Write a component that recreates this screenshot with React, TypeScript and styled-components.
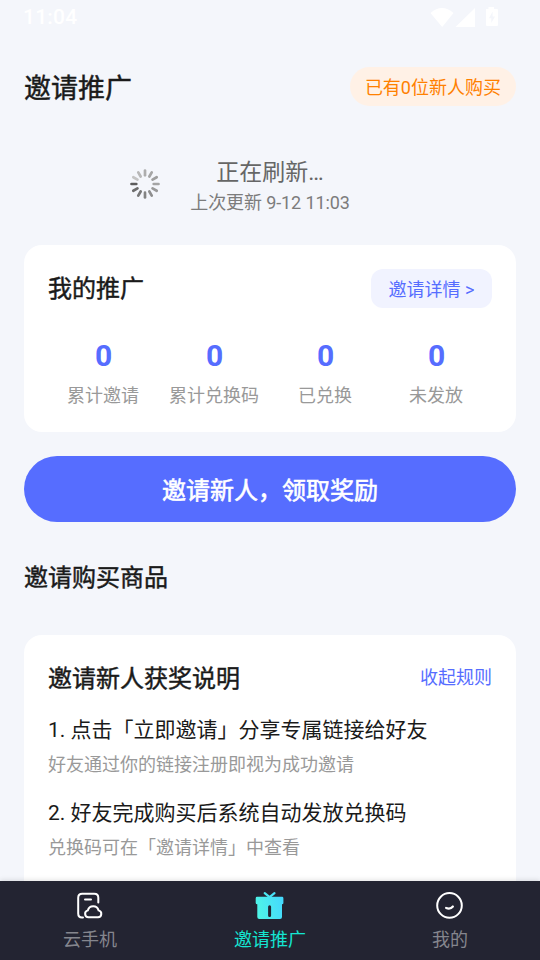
import React from "react";
import styled, { createGlobalStyle } from "styled-components";

const GlobalStyle = createGlobalStyle`
  * { box-sizing: border-box; }
  body {
    margin: 0;
    background: #f4f6fb;
    font-family: Roboto, "Noto Sans CJK SC", sans-serif;
    font-weight: 400;
  }
`;

const Screen = styled.div`
  width: 540px;
  height: 960px;
  display: flex;
  flex-direction: column;
  overflow: hidden;
  background: #f4f6fb;
`;

const StatusBar = styled.header`
  flex: none;
  height: 36px;
  padding: 0 42px 0 23px;
  display: flex;
  justify-content: space-between;
  color: #fff;
`;

const Clock = styled.span`
  font-size: 21px;
  line-height: 34px;
  font-weight: 500;
  letter-spacing: 0.2px;
`;

const StatusIcons = styled.svg`
  width: 68px;
  height: 22px;
  margin-top: 6px;
`;

const Content = styled.main`
  flex: 1;
  min-height: 0;
  overflow: hidden;
  padding: 31px 24px 0;
`;

const Bar = styled.div`
  display: flex;
  align-items: flex-start;
  justify-content: space-between;
  height: 39px;
`;

const Title = styled.h1<{ $size?: number; $line?: number }>`
  margin: 0;
  color: #1a1a1a;
  font-size: ${(p) => p.$size ?? 24}px;
  line-height: ${(p) => p.$line ?? 41}px;
  font-weight: 400;
  white-space: nowrap;
  -webkit-text-stroke: 0.45px currentColor;
`;

const BuyerPill = styled.span`
  height: 39px;
  padding: 0 15px;
  border-radius: 20px;
  background: #fff1e6;
  color: #ff8000;
  font-size: 18px;
  line-height: 41px;
  white-space: nowrap;
`;

const Refresh = styled.section`
  display: grid;
  grid-template-columns: 166px 160px 1fr;
  margin-top: 50px;
  height: 89px;
`;

const Spinner = styled.svg`
  width: 32px;
  height: 32px;
  margin: 12px 0 0 105px;
`;

const RefreshText = styled.div`
  text-align: center;
  white-space: nowrap;
`;

const RefreshState = styled.div`
  color: #666;
  font-size: 23px;
  line-height: 34px;
`;

const RefreshTime = styled.div`
  color: #7c7c7c;
  font-size: 18px;
  line-height: 26px;
  letter-spacing: -0.12px;
`;

const Card = styled.section`
  padding: 24px;
  border-radius: 18px;
  background: #fff;
`;

const DetailButton = styled.button`
  height: 39px;
  width: 121px;
  padding: 0;
  border: 0;
  border-radius: 12px;
  background: #f1f3ff;
  color: #566dff;
  font: inherit;
  font-size: 18px;
  line-height: 41px;
`;

const Stats = styled.div`
  display: grid;
  grid-template-columns: repeat(4, 1fr);
  margin-top: 29px;
  height: 71px;
  text-align: center;
  white-space: nowrap;
`;

const StatValue = styled.div`
  color: #566dff;
  font-size: 30px;
  line-height: 38px;
  font-weight: 700;
`;

const StatLabel = styled.div`
  color: #999;
  font-size: 18px;
  line-height: 26px;
  margin-top: 8px;
  padding-right: 1px;
`;

const InviteButton = styled.button`
  display: block;
  width: 100%;
  height: 66px;
  margin: 24px 0 35px;
  padding: 4px 0 0;
  border: 0;
  border-radius: 33px;
  background: #566dff;
  color: #fff;
  font: inherit;
  font-size: 24px;
  line-height: 62px;
  -webkit-text-stroke: 0.6px currentColor;
`;

const RulesCard = styled(Card)`
  margin-top: 35px;
  height: 400px;
`;

const Collapse = styled.span`
  color: #566dff;
  font-size: 18px;
  line-height: 37px;
`;

const Rule = styled.div`
  margin-top: 14px;
  height: 69px;
  white-space: nowrap;
`;

const RuleTitle = styled.div`
  color: #1a1a1a;
  font-size: 21px;
  line-height: 36px;
`;

const RuleNote = styled.div`
  color: #999;
  font-size: 18px;
  line-height: 33px;
`;

const TabBar = styled.nav`
  position: relative;
  flex: none;
  height: 79px;
  display: grid;
  grid-template-columns: repeat(3, 1fr);
  background: #232432;
  box-shadow: 0 -1px 5px rgba(0, 0, 0, 0.12);
`;

const Tab = styled.div<{ $active?: boolean }>`
  display: flex;
  flex-direction: column;
  align-items: center;
  padding-top: 8px;
  color: ${(p) => (p.$active ? "#14e6d2" : "#85868e")};
  font-size: 18px;
  line-height: 33px;

  svg {
    width: 32px;
    height: 32px;
    margin-bottom: 2px;
  }
`;

const stats = [
  ["0", "累计邀请"],
  ["0", "累计兑换码"],
  ["0", "已兑换"],
  ["0", "未发放"],
];

const rules = [
  ["1. 点击「立即邀请」分享专属链接给好友", "好友通过你的链接注册即视为成功邀请"],
  ["2. 好友完成购买后系统自动发放兑换码", "兑换码可在「邀请详情」中查看"],
];

const spokeShades = [
  "#adadad", "#a6a6a6", "#9e9e9e", "#a4a4a4", "#999", "#8e8e8e",
  "#838383", "#787878", "#6c6c6c", "#5c5c5c", "#c4c4c4", "#b8b8b8",
];

export default function App() {
  return (
    <>
      <GlobalStyle />
      <Screen>
        <StatusBar>
          <Clock>11:04</Clock>
          <StatusIcons viewBox="0 0 68 22" fill="#fff">
            <path d="M0.5 7 Q12 -3 23.5 7 L12.2 21 Z" />
            <path d="M25.5 21 L45 2 V21 Z" />
            <path
              fillRule="evenodd"
              d="M56 3 H58.5 V1 H64 V3 H67 Q68 3 68 4 V19 Q68 20 67 20 H57 Q56 20 56 19 V4 Z M62.6 5.5 L59 12.2 H61.3 V17 L65 10.5 H62.6 Z"
            />
          </StatusIcons>
        </StatusBar>

        <Content>
          <Bar>
            <Title $size={27} $line={45}>邀请推广</Title>
            <BuyerPill>已有0位新人购买</BuyerPill>
          </Bar>

          <Refresh>
            <Spinner viewBox="-16 -16 32 32" strokeWidth="2.7" strokeLinecap="round">
              {spokeShades.map((shade, i) => (
                <line key={i} x1="0" y1="-8.7" x2="0" y2="-13.5" stroke={shade} transform={`rotate(${i * 30})`} />
              ))}
            </Spinner>
            <RefreshText>
              <RefreshState>正在刷新…</RefreshState>
              <RefreshTime>上次更新 9-12 11:03</RefreshTime>
            </RefreshText>
          </Refresh>

          <Card>
            <Bar>
              <Title>我的推广</Title>
              <DetailButton>邀请详情 &gt;</DetailButton>
            </Bar>
            <Stats>
              {stats.map(([value, label]) => (
                <div key={label}>
                  <StatValue>{value}</StatValue>
                  <StatLabel>{label}</StatLabel>
                </div>
              ))}
            </Stats>
          </Card>

          <InviteButton>邀请新人，领取奖励</InviteButton>
          <Title as="h2" $line={43}>邀请购买商品</Title>

          <RulesCard>
            <Bar>
              <Title as="h2">邀请新人获奖说明</Title>
              <Collapse>收起规则</Collapse>
            </Bar>
            {rules.map(([title, note]) => (
              <Rule key={title}>
                <RuleTitle>{title}</RuleTitle>
                <RuleNote>{note}</RuleNote>
              </Rule>
            ))}
          </RulesCard>
        </Content>

        <TabBar>
          <Tab>
            <svg viewBox="0 0 32 32" fill="none" stroke="#fff" strokeWidth="2" strokeLinecap="round">
              <path d="M9 28.4 H8 Q4.2 28.4 4.2 24.4 V8.8 Q4.2 4.8 8.2 4.8 H20.3 Q24.3 4.8 24.3 8.8 V13.5" />
              <path d="M11 10.4 H17" />
              <path d="M14.5 28.3 A3.5 3.5 0 0 1 13.8 21.4 A5.6 5.6 0 0 1 24.6 21.4 A3.5 3.5 0 0 1 24 28.3 Z" />
            </svg>
            云手机
          </Tab>
          <Tab $active>
            <svg viewBox="0 0 32 32">
              <defs>
                <linearGradient id="gift" gradientUnits="userSpaceOnUse" x1="2" x2="29" y1="20" y2="14">
                  <stop offset="0" stopColor="#4ff5e6" />
                  <stop offset="1" stopColor="#45d9fd" />
                </linearGradient>
              </defs>
              <path
                d="M10.7 4.2 L15.6 8.2 L20.5 4.2"
                fill="none"
                stroke="url(#gift)"
                strokeWidth="2.2"
                strokeLinecap="round"
              />
              <path
                fill="url(#gift)"
                fillRule="evenodd"
                d="M3 7.8 H28 Q29.4 7.8 29.4 9.2 V13.9 Q29.4 15.3 28 15.3 V28 Q28 30 26 30 H5.3 Q3.3 30 3.3 28 V15.3 Q1.7 15.3 1.7 13.9 V9.2 Q1.7 7.8 3 7.8 Z M15.6 16.2 Q14.1 16.2 14.1 17.7 V26.5 Q14.1 28 15.6 28 Q17.1 28 17.1 26.5 V17.7 Q17.1 16.2 15.6 16.2 Z"
              />
            </svg>
            邀请推广
          </Tab>
          <Tab>
            <svg viewBox="0 0 32 32" fill="none" stroke="#fff" strokeWidth="2" strokeLinecap="round">
              <circle cx="15.5" cy="16.4" r="12.3" />
              <path d="M12.1 19 Q16.5 20.6 18.9 17.5" strokeWidth="2.2" />
            </svg>
            我的
          </Tab>
        </TabBar>
      </Screen>
    </>
  );
}
